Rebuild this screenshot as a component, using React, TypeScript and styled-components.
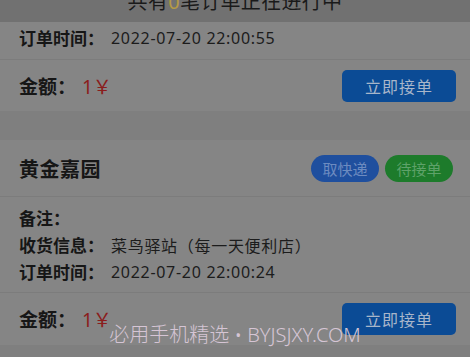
import styled, { createGlobalStyle } from 'styled-components';

const GlobalStyle = createGlobalStyle`
  html, body {
    margin: 0;
    padding: 0;
    background: #7f7f7f;
  }
  body {
    font-family: "Noto Sans", "Noto Sans CJK SC", sans-serif;
    color: #161616;
  }
`;

const Page = styled.div`
  position: relative;
  width: 470px;
  height: 357px;
  overflow: hidden;
  background: #7f7f7f;
  display: flex;
  flex-direction: column;
`;

// 顶部提示
const Header = styled.div`
  height: 22px;
  flex-shrink: 0;
  overflow: hidden;
  display: flex;
  align-items: flex-end;
  justify-content: center;
  background: #717171;
`;

const HeaderText = styled.div`
  font-size: 20px;
  line-height: 20px;
  margin-bottom: 10px;
  letter-spacing: 0.3px;
  color: #1a1a1a;
`;

const Count = styled.span`
  color: #b59a45;
`;
// 顶部提示 end

const List = styled.div`
  display: flex;
  flex-direction: column;
  gap: 29px;
`;

const Card = styled.div`
  background: #858585;
  display: flex;
  flex-direction: column;
`;

const TitleRow = styled.div`
  height: 56px;
  padding: 0 17px 0 19px;
  display: flex;
  align-items: center;
  justify-content: space-between;
  border-bottom: 1px solid #7c7c7c;
`;

const Title = styled.div`
  font-size: 20px;
  font-weight: 700;
  letter-spacing: 0.5px;
`;

const Badges = styled.div`
  display: flex;
  gap: 6px;
`;

const Badge = styled.span<{ $bg: string; $fg: string }>`
  width: 68px;
  height: 27px;
  border-radius: 14px;
  background: ${p => p.$bg};
  color: ${p => p.$fg};
  font-size: 15px;
  display: flex;
  align-items: center;
  justify-content: center;
`;

const Info = styled.div<{ $top: number; $bottom: number }>`
  padding: ${p => p.$top}px 19px ${p => p.$bottom}px;
  border-bottom: 1px solid #7c7c7c;
`;

const Line = styled.div`
  height: 27px;
  display: flex;
  align-items: center;
  white-space: nowrap;
`;

const Label = styled.span`
  font-size: 17px;
  font-weight: 700;
  width: 92px;
  flex-shrink: 0;
`;

const Value = styled.span`
  font-size: 16px;
  letter-spacing: 0.7px;
  color: #1c1c1c;
`;

const AmountRow = styled.div<{ $h: number }>`
  height: ${p => p.$h}px;
  padding: 0 14px 0 19px;
  display: flex;
  align-items: center;
  justify-content: space-between;
`;

const Amount = styled.div`
  display: flex;
  align-items: center;
`;

const AmountLabel = styled.span`
  font-size: 19px;
  font-weight: 700;
  width: 63px;
`;

const Price = styled.span`
  font-size: 19px;
  color: #8b1c1c;
`;

const TakeButton = styled.button`
  width: 114px;
  height: 32px;
  border: none;
  border-radius: 5px;
  background: #0b4b95;
  color: #a8b6ca;
  font-family: inherit;
  font-size: 16px;
  letter-spacing: 1px;
  padding: 0;
`;

const Watermark = styled.div`
  position: absolute;
  left: 0;
  right: 0;
  top: 322px;
  text-align: center;
  font-family: "Noto Sans", "Noto Sans CJK SC", sans-serif;
  font-size: 20px;
  font-weight: 300;
  line-height: 26px;
  color: #d6c5d5;
`;

export default function App() {
  return (
    <>
      <GlobalStyle />
      <Page>
        <Header>
          <HeaderText>
            共有<Count>0</Count>笔订单正在进行中
          </HeaderText>
        </Header>
        <List>
          <Card>
            <Info $top={2} $bottom={8}>
              <Line>
                <Label>订单时间：</Label>
                <Value>2022-07-20 22:00:55</Value>
              </Line>
            </Info>
            <AmountRow $h={51}>
              <Amount>
                <AmountLabel>金额：</AmountLabel>
                <Price>1￥</Price>
              </Amount>
              <TakeButton>立即接单</TakeButton>
            </AmountRow>
          </Card>
          <Card>
            <TitleRow>
              <Title>黄金嘉园</Title>
              <Badges>
                <Badge $bg="#1f4f9e" $fg="#6d8bc0">取快递</Badge>
                <Badge $bg="#1d7b2b" $fg="#5ea269">待接单</Badge>
              </Badges>
            </TitleRow>
            <Info $top={7} $bottom={7}>
              <Line>
                <Label>备注：</Label>
              </Line>
              <Line>
                <Label>收货信息：</Label>
                <Value>菜鸟驿站（每一天便利店）</Value>
              </Line>
              <Line>
                <Label>订单时间：</Label>
                <Value>2022-07-20 22:00:24</Value>
              </Line>
            </Info>
            <AmountRow $h={52}>
              <Amount>
                <AmountLabel>金额：</AmountLabel>
                <Price>1￥</Price>
              </Amount>
              <TakeButton>立即接单</TakeButton>
            </AmountRow>
          </Card>
        </List>
        <Watermark>必用手机精选 • BYJSJXY.COM</Watermark>
      </Page>
    </>
  );
}
